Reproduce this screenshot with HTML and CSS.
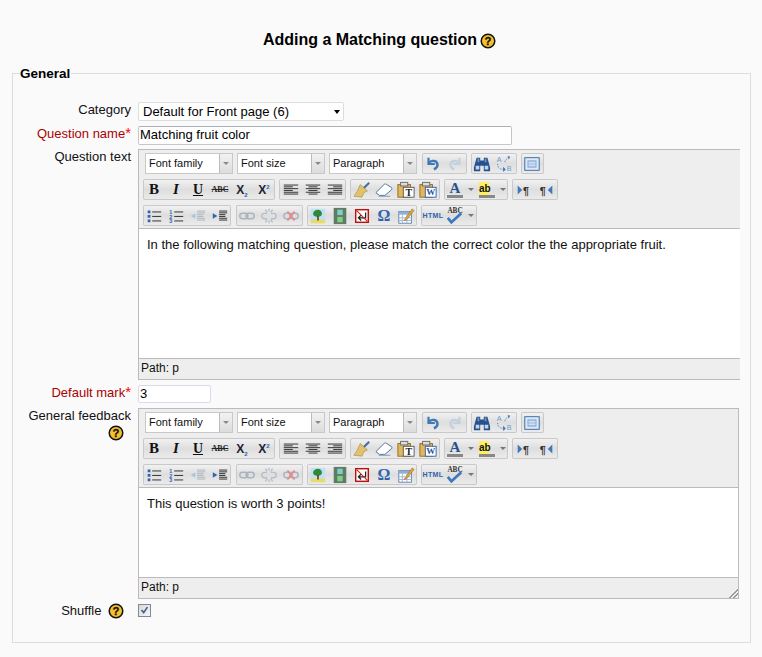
FILE: index.html
```html
<!DOCTYPE html>
<html lang="en">
<head>
<meta charset="utf-8">
<title>Adding a Matching question</title>
<link rel="stylesheet" href="styles.css">
</head>
<body>
<svg class="defs" width="0" height="0" aria-hidden="true">
  <symbol id="help" viewBox="0 0 17 17">
    <circle cx="8.5" cy="8.5" r="7.2" fill="#f5c02c" stroke="#111" stroke-width="1.6"/>
    <text x="8.5" y="13" text-anchor="middle" font-family="Liberation Sans" font-weight="700" font-size="12" fill="#111" stroke="#111" stroke-width=".3">?</text>
  </symbol>
  <symbol id="undo" viewBox="0 0 20 20"><path d="M5 3v7h7" fill="none" stroke="#3f78b8" stroke-width="2.400"/><path d="M5 9c3-4 10-3 10 2 0 3-2 4-4 5" fill="none" stroke="#3f78b8" stroke-width="2.600"/></symbol>
  <symbol id="redo" viewBox="0 0 20 20"><path d="M15 3v7H8" fill="none" stroke="#c3d0de" stroke-width="2.400"/><path d="M15 9c-3-4-10-3-10 2 0 3 2 4 4 5" fill="none" stroke="#c3d0de" stroke-width="2.600"/></symbol>
  <symbol id="find" viewBox="0 0 20 20"><path d="M4 3h4v3h4V3h4l3 11v4h-7v-6H8v6H1v-4z" fill="#27508c"/><path d="M3 12h4v4H3zM13 12h4v4h-4z" fill="#bcd6ef"/><path d="M5 4h2v4H5zM13 4h2v4h-2z" fill="#6f94c4"/></symbol>
  <symbol id="replace" viewBox="0 0 20 20"><text x="2" y="8" font-family="Liberation Sans" font-size="8" fill="#6a9ad0">A</text><text x="13" y="18" font-family="Liberation Sans" font-size="8" fill="#6a9ad0">B</text><path d="M3 10c0 5 3 6 7 6M11 8c0-2 1-3 4-5" fill="none" stroke="#3f78b8" stroke-dasharray="1 1"/><path d="M9 13l3 3-3 3zM14 1l3 1-2 3z" fill="#3f78b8"/></symbol>
  <symbol id="full" viewBox="0 0 20 20"><rect x="2" y="3" width="16" height="14" fill="#dce8f6" stroke="#31639f"/><path d="M5 6h10v8H5z" fill="#7fa6d6"/><path d="M6 8h8M6 10h8M6 12h8" stroke="#fff"/></symbol>
  <symbol id="al" viewBox="0 0 20 20"><path d="M2 4.500h16M2 6.500h10M2 8.500h16M2 10.500h10M2 12.500h16M2 14.500h16" stroke="#222"/></symbol>
  <symbol id="ac" viewBox="0 0 20 20"><path d="M2 4.500h16M5 6.500h10M2 8.500h16M5 10.500h10M2 12.500h16M5 14.500h10" stroke="#222"/></symbol>
  <symbol id="ar" viewBox="0 0 20 20"><path d="M2 4.500h16M8 6.500h10M2 8.500h16M8 10.500h10M2 12.500h16M2 14.500h16" stroke="#222"/></symbol>
  <symbol id="brush" viewBox="0 0 20 20"><path d="M11 9L18 2" stroke="#4b6fa0" stroke-width="2.400"/><path d="M8 4l8 7-4 2-2 5-9-1 4-6z" fill="#e2c36c" stroke="#9a7f30" stroke-width=".6"/></symbol>
  <symbol id="eraser" viewBox="0 0 20 20"><path d="M1 13L10 4c1-1 2-1 3 0l5 3c1 1 1 2 0 3l-7 6H5z" fill="#fff" stroke="#3f6a9c"/><path d="M4 17h13" stroke="#7d99bb"/></symbol>
  <symbol id="pastet" viewBox="0 0 20 20"><rect x="1" y="4" width="14" height="14" fill="#e3b65a" stroke="#8a6a20"/><rect x="4" y="1.500" width="8" height="4" fill="#ddd" stroke="#666"/><rect x="7" y="7" width="12" height="11" fill="#fff" stroke="#555"/><text x="13" y="16.500" text-anchor="middle" font-family="Liberation Serif" font-weight="700" font-size="11" fill="#222">T</text></symbol>
  <symbol id="pastew" viewBox="0 0 20 20"><rect x="1" y="4" width="14" height="14" fill="#e3b65a" stroke="#8a6a20"/><rect x="4" y="1.500" width="8" height="4" fill="#ddd" stroke="#666"/><rect x="7" y="7" width="12" height="11" fill="#fff" stroke="#2f5da0"/><text x="13" y="16" text-anchor="middle" font-family="Liberation Serif" font-weight="700" font-size="10" fill="#2456a6">W</text></symbol>
  <symbol id="ltr" viewBox="0 0 20 20"><path d="M3 5l5 5-5 5z" fill="#3f78b8"/><text x="9" y="15" font-family="Liberation Sans" font-weight="700" font-size="12" fill="#333">¶</text></symbol>
  <symbol id="rtl" viewBox="0 0 20 20"><path d="M17 5l-5 5 5 5z" fill="#3f78b8"/><text x="3" y="15" font-family="Liberation Sans" font-weight="700" font-size="12" fill="#333">¶</text></symbol>
  <symbol id="ul" viewBox="0 0 20 20"><path d="M8 5.500h10M8 10.500h10M8 15.500h10" stroke="#222"/><path d="M3 4h3v3H3zM3 9h3v3H3zM3 14h3v3H3z" fill="#2f63ad"/></symbol>
  <symbol id="ol" viewBox="0 0 20 20"><path d="M8 5.500h10M8 10.500h10M8 15.500h10" stroke="#222"/><text x="2.500" y="8" font-family="Liberation Sans" font-weight="700" font-size="6" fill="#2f63ad">1</text><text x="2.500" y="13" font-family="Liberation Sans" font-weight="700" font-size="6" fill="#2f63ad">2</text><text x="2.500" y="18" font-family="Liberation Sans" font-weight="700" font-size="6" fill="#2f63ad">3</text></symbol>
  <symbol id="outd" viewBox="0 0 20 20"><path d="M9 4.500h9M9 6.500h9M9 8.500h7M9 10.500h7M9 12.500h9M9 14.500h9" stroke="#aab2bb"/><path d="M7 7v6L2 10z" fill="#aac3de"/></symbol>
  <symbol id="ind" viewBox="0 0 20 20"><path d="M9 4.500h9M9 6.500h9M9 8.500h7M9 10.500h7M9 12.500h9M9 14.500h9" stroke="#222"/><path d="M2 7v6l5-3z" fill="#2f63ad"/></symbol>
  <symbol id="link" viewBox="0 0 20 20"><g fill="none" stroke="#aab4c0" stroke-width="1.600"><rect x="2" y="7" width="9" height="6" rx="3"/><rect x="9" y="7" width="9" height="6" rx="3"/></g></symbol>
  <symbol id="unlink" viewBox="0 0 20 20"><g fill="none" stroke="#b6bec8" stroke-width="1.500"><path d="M8 7H5a3 3 0 0 0 0 6h3M12 7h3a3 3 0 0 1 0 6h-3M6 3l2 3M14 3l-2 3M6 17l2-3M14 17l-2-3M10 2v3M10 15v3"/></g></symbol>
  <symbol id="anchor" viewBox="0 0 20 20"><g fill="none" stroke="#aab4c0" stroke-width="1.600"><rect x="2" y="7" width="9" height="6" rx="3"/><rect x="9" y="7" width="9" height="6" rx="3"/></g><path d="M6 5l8 10M14 5l-8 10" stroke="#e28b8b" stroke-width="2"/></symbol>
  <symbol id="image" viewBox="0 0 20 20"><rect x="2" y="2" width="16" height="16" fill="#bfe0f6"/><path d="M2 14h16v4H2z" fill="#e9dc66"/><path d="M10 3c4 0 6 5 3 7-1 1-6 1-7 0-3-2-1-7 4-7z" fill="#2f8a36"/><path d="M9 10h2v5H9z" fill="#7a4a1e"/></symbol>
  <symbol id="media" viewBox="0 0 20 20"><rect x="3" y="1" width="14" height="18" fill="#5f7a66"/><rect x="7" y="3" width="6" height="6" fill="#7fd0c4"/><rect x="7" y="11" width="6" height="6" fill="#7fd07f"/></symbol>
  <symbol id="nbr" viewBox="0 0 20 20"><rect x="3" y="3" width="14" height="14" fill="#fff" stroke="#b11" stroke-width="1.600"/><path d="M14 6v6H7M9 9l-3 3 3 3" fill="none" stroke="#222" stroke-width="1.400"/><path d="M4 4l12 12" stroke="#c22" stroke-width="1.200"/></symbol>
  <symbol id="table" viewBox="0 0 20 20"><rect x="2" y="5" width="14" height="13" fill="#fff" stroke="#5a7fae"/><path d="M2 8h14M2 12h14M2 15h14M6 8v10M11 8v10" stroke="#9db5d0"/><path d="M2 5h14v3H2z" fill="#8fb0d6"/><path d="M9 13l8-11 2 2-8 10-3 1z" fill="#e3a53c" stroke="#8a5a10" stroke-width=".5"/></symbol>
  <symbol id="spell" viewBox="0 0 24 20"><text x="12" y="7" text-anchor="middle" font-family="Liberation Serif" font-weight="700" font-size="8" fill="#333">ABC</text><path d="M4 12l4 5L19 7" fill="none" stroke="#3f78c0" stroke-width="3"/></symbol>
</svg>

<main class="page">
  <h2 class="title">Adding a Matching question<svg class="help help-title"><use href="#help"/></svg></h2>
  <form>
    <fieldset class="box">
      <legend class="box-legend">General</legend>

      <div class="row row-category">
        <div class="lab">Category</div>
        <div class="sel-wrap"><select class="sel"><option>Default for Front page (6)</option></select></div>
      </div>

      <div class="row row-name">
        <div class="lab req">Question name<span class="star">*</span></div>
        <input class="inp inp-name" value="Matching fruit color">
      </div>

      <div class="row row-text">
        <div class="lab">Question text</div>
        <div class="editor editor-wide">
          <div class="tools">
            <div class="tool-row tool-row-sel">
              <div class="drop">Font family<span class="drop-arrow"></span></div>
              <div class="drop">Font size<span class="drop-arrow"></span></div>
              <div class="drop">Paragraph<span class="drop-arrow"></span></div>
              <div class="grp grp-undo"><span class="b"><svg><use href="#undo"/></svg></span><span class="b"><svg><use href="#redo"/></svg></span></div>
              <div class="grp grp-find"><span class="b"><svg><use href="#find"/></svg></span><span class="b"><svg><use href="#replace"/></svg></span></div>
              <div class="grp"><span class="b"><svg><use href="#full"/></svg></span></div>
            </div>
            <div class="tool-row">
              <div class="grp grp-flush"><span class="b t-b">B</span><span class="b t-i">I</span><span class="b t-u">U</span><span class="b t-s">ABC</span><span class="b t-x"><span>X<sub>2</sub></span></span><span class="b t-x"><span>X<sup>2</sup></span></span></div>
              <div class="grp grp-left"><span class="b"><svg><use href="#al"/></svg></span><span class="b"><svg><use href="#ac"/></svg></span><span class="b"><svg><use href="#ar"/></svg></span></div>
              <div class="grp grp-both"><span class="b"><svg><use href="#brush"/></svg></span><span class="b"><svg><use href="#eraser"/></svg></span><span class="b"><svg><use href="#pastet"/></svg></span><span class="b"><svg><use href="#pastew"/></svg></span></div>
              <div class="grp grp-flush"><span class="b t-a"><span class="a-letter">A</span></span><span class="mini"></span><span class="b t-h"><span class="h-letter">ab</span></span><span class="mini"></span></div>
              <div class="grp grp-both"><span class="b"><svg><use href="#ltr"/></svg></span><span class="b"><svg><use href="#rtl"/></svg></span></div>
            </div>
            <div class="tool-row">
              <div class="grp grp-flush"><span class="b"><svg><use href="#ul"/></svg></span><span class="b"><svg><use href="#ol"/></svg></span><span class="b"><svg><use href="#outd"/></svg></span><span class="b"><svg><use href="#ind"/></svg></span></div>
              <div class="grp grp-link"><span class="b"><svg><use href="#link"/></svg></span><span class="b"><svg><use href="#unlink"/></svg></span><span class="b"><svg><use href="#anchor"/></svg></span></div>
              <div class="grp grp-flush"><span class="b"><svg><use href="#image"/></svg></span><span class="b"><svg><use href="#media"/></svg></span><span class="b"><svg><use href="#nbr"/></svg></span><span class="b t-o">Ω</span><span class="b"><svg><use href="#table"/></svg></span></div>
              <div class="grp grp-both"><span class="b t-html">HTML</span><span class="b"><svg class="wide"><use href="#spell"/></svg></span><span class="mini"></span></div>
            </div>
          </div>
          <div class="area area-1">In the following matching question, please match the correct color the the appropriate fruit.</div>
          <div class="path">Path: p</div>
        </div>
      </div>

      <div class="row row-mark">
        <div class="lab req">Default mark<span class="star">*</span></div>
        <input class="inp inp-mark" value="3">
      </div>

      <div class="row row-feedback">
        <div class="lab">General feedback<br><svg class="help help-lab"><use href="#help"/></svg></div>
        <div class="editor">
          <div class="tools">
            <div class="tool-row tool-row-sel">
              <div class="drop">Font family<span class="drop-arrow"></span></div>
              <div class="drop">Font size<span class="drop-arrow"></span></div>
              <div class="drop">Paragraph<span class="drop-arrow"></span></div>
              <div class="grp grp-undo"><span class="b"><svg><use href="#undo"/></svg></span><span class="b"><svg><use href="#redo"/></svg></span></div>
              <div class="grp grp-find"><span class="b"><svg><use href="#find"/></svg></span><span class="b"><svg><use href="#replace"/></svg></span></div>
              <div class="grp"><span class="b"><svg><use href="#full"/></svg></span></div>
            </div>
            <div class="tool-row">
              <div class="grp grp-flush"><span class="b t-b">B</span><span class="b t-i">I</span><span class="b t-u">U</span><span class="b t-s">ABC</span><span class="b t-x"><span>X<sub>2</sub></span></span><span class="b t-x"><span>X<sup>2</sup></span></span></div>
              <div class="grp grp-left"><span class="b"><svg><use href="#al"/></svg></span><span class="b"><svg><use href="#ac"/></svg></span><span class="b"><svg><use href="#ar"/></svg></span></div>
              <div class="grp grp-both"><span class="b"><svg><use href="#brush"/></svg></span><span class="b"><svg><use href="#eraser"/></svg></span><span class="b"><svg><use href="#pastet"/></svg></span><span class="b"><svg><use href="#pastew"/></svg></span></div>
              <div class="grp grp-flush"><span class="b t-a"><span class="a-letter">A</span></span><span class="mini"></span><span class="b t-h"><span class="h-letter">ab</span></span><span class="mini"></span></div>
              <div class="grp grp-both"><span class="b"><svg><use href="#ltr"/></svg></span><span class="b"><svg><use href="#rtl"/></svg></span></div>
            </div>
            <div class="tool-row">
              <div class="grp grp-flush"><span class="b"><svg><use href="#ul"/></svg></span><span class="b"><svg><use href="#ol"/></svg></span><span class="b"><svg><use href="#outd"/></svg></span><span class="b"><svg><use href="#ind"/></svg></span></div>
              <div class="grp grp-link"><span class="b"><svg><use href="#link"/></svg></span><span class="b"><svg><use href="#unlink"/></svg></span><span class="b"><svg><use href="#anchor"/></svg></span></div>
              <div class="grp grp-flush"><span class="b"><svg><use href="#image"/></svg></span><span class="b"><svg><use href="#media"/></svg></span><span class="b"><svg><use href="#nbr"/></svg></span><span class="b t-o">Ω</span><span class="b"><svg><use href="#table"/></svg></span></div>
              <div class="grp grp-both"><span class="b t-html">HTML</span><span class="b"><svg class="wide"><use href="#spell"/></svg></span><span class="mini"></span></div>
            </div>
          </div>
          <div class="area area-2">This question is worth 3 points!</div>
          <div class="path">Path: p<span class="grip"></span></div>
        </div>
      </div>

      <div class="row row-shuffle">
        <div class="lab">Shuffle <svg class="help help-inline"><use href="#help"/></svg></div>
        <span class="check"><svg viewBox="0 0 13 13"><path d="M3 6l2.500 3L10 2.500" fill="none" stroke="#4a5f8f" stroke-width="2"/></svg></span>
      </div>
    </fieldset>
  </form>
</main>
</body>
</html>
```

FILE: styles.css
```css
* { box-sizing: border-box; }
html, body { margin: 0; padding: 0; }
body {
  background: #fafafa;
  color: #111;
  font-family: "Liberation Sans", Arial, sans-serif;
  font-size: 13px;
  overflow: hidden;
  height: 657px;
}
.defs { position: absolute; }
.page { padding: 31px 12px 0; }
.title {
  margin: 0 0 17px;
  height: 18px;
  font-size: 16px;
  line-height: 18px;
  font-weight: 700;
  text-align: center;
  color: #000;
  padding-right: 3px;
  white-space: nowrap;
}
.help { width: 16px; height: 16px; vertical-align: -4px; }
.help-title { margin-left: 3px; }
.box {
  margin: 0;
  width: 739px;
  height: 577px;
  padding: 21px 0 0;
  border: 1px solid #ddd;
  min-width: 0;
}
.box-legend {
  margin-left: 7px;
  padding: 0 1px 0 0;
  font-size: 13.5px;
  line-height: 15px;
  font-weight: 700;
  color: #000;
}
.row { display: flex; gap: 7px; align-items: flex-start; }
.lab {
  width: 118px;
  flex: none;
  padding-top: 1px;
  text-align: right;
  line-height: 14px;
}
.req { color: #a00; }
.star { color: #f00; font-size: 15px; line-height: 10px; }
.row-category { height: 24px; }
.row-name { height: 23px; }
.row-text { height: 236px; }
.row-mark { height: 23px; }
.row-feedback { height: 196px; }
.sel-wrap { position: relative; width: 206px; height: 19px; }
.sel-wrap::after {
  content: "";
  position: absolute;
  right: 4px;
  top: 8px;
  border: 3px solid transparent;
  border-top: 4px solid #000;
  border-bottom: 0;
}
.sel {
  display: block;
  appearance: none;
  width: 206px;
  height: 19px;
  padding: 0 0 0 4px;
  border: 1px solid #ddd;
  border-radius: 2px;
  background: #fff;
  font: 13px "Liberation Sans", Arial, sans-serif;
  color: #000;
}
.inp {
  display: block;
  height: 19px;
  padding: 0 1px 2px;
  border: 1px solid #c3c7cc;
  border-top-color: #aab0b6;
  border-radius: 2px;
  background: #fff;
  font: 13px "Liberation Sans", Arial, sans-serif;
  color: #000;
}
.inp-name { width: 374px; }
.inp-mark { width: 73px; height: 18px; border-color: #d5dde8; }
.help-lab { display: inline-block; margin: 2px 7px 0 0; vertical-align: top; }
.help-inline { margin: 0 7px 0 3px; }
.row-shuffle .lab { margin-top: -2px; }

.editor {
  width: 601px;
  border: 1px solid #bbb;
  background: #eee;
  height: 191px;
  display: flex;
  flex-direction: column;
}
.editor-wide { width: 602px; height: 231px; border-right: 0; }
.tools {
  height: 78px;
  padding: 3px 0 0 4px;
  display: flex;
  flex-direction: column;
  gap: 5px;
  flex: none;
}
.tool-row { display: flex; gap: 4px; height: 21px; }
.tool-row-sel { padding-left: 2px; }
.drop {
  width: 88px;
  height: 21px;
  background: #fff;
  border: 1px solid #c8c8c8;
  line-height: 18px;
  padding-left: 3px;
  color: #111;
  position: relative;
  font-size: 11px;
}
.drop-arrow {
  position: absolute;
  top: 0;
  right: 0;
  width: 13px;
  height: 19px;
  background: linear-gradient(#f2f2f2, #dcdcdc);
  border-left: 1px solid #bbb;
}
.drop-arrow::after {
  content: "";
  position: absolute;
  left: 3px;
  top: 8px;
  border: 3px solid transparent;
  border-top: 3px solid #888;
  border-bottom: 0;
}
.grp {
  display: flex;
  height: 21px;
  padding-right: 1px;
  box-shadow: inset 0 0 0 1px #c9c9c9;
  border-radius: 2px;
  background: linear-gradient(#f3f3f3, #dedede 50%, #ececec);
}
.grp-flush { padding-right: 0; }
.grp-find { padding-right: 2px; }
.grp-both { padding: 0 1px; }
.grp-left { padding: 0 0 0 1px; }
.grp-undo { margin-left: 1px; }
.grp-link { margin-left: 1px; }
.b {
  width: 22px;
  height: 21px;
  display: flex;
  align-items: center;
  justify-content: center;
  flex: none;
  color: #222;
}
.b svg { width: 18px; height: 18px; display: block; overflow: visible; }
.b svg.wide { width: 22px; }
.mini { width: 10px; height: 21px; position: relative; flex: none; }
.mini::after {
  content: "";
  position: absolute;
  left: 2px;
  top: 9px;
  border: 3px solid transparent;
  border-top: 3px solid #777;
  border-bottom: 0;
}
.t-b { font: 700 15px "Liberation Serif", serif; color: #111; }
.t-i { font: italic 700 15px "Liberation Serif", serif; color: #111; }
.t-u { font: 700 14px "Liberation Serif", serif; text-decoration: underline; color: #111; }
.t-s { font: 700 8px "Liberation Serif", serif; text-decoration: line-through; color: #222; }
.t-x { font: 700 12px "Liberation Sans", sans-serif; color: #223; }
.t-x sub, .t-x sup { font-size: 6px; color: #2f63ad; line-height: 0; }
.a-letter {
  display: block;
  width: 16px;
  text-align: center;
  font: 700 15px/14px "Liberation Serif", serif;
  color: #27508c;
  border-bottom: 3px solid #888;
}
.h-letter {
  display: block;
  width: 16px;
  font: 700 10px/13px "Liberation Sans", sans-serif;
  color: #111;
  background: linear-gradient(90deg, #ffef5e 60%, transparent 60%);
  border-bottom: 3px solid #888;
}
.t-o { font: 700 16px "Liberation Serif", serif; color: #2f63ad; }
.t-html { font: 700 7px "Liberation Sans", sans-serif; color: #2f63ad; letter-spacing: .4px; }

.area {
  flex: 1;
  background: #fff;
  border-top: 1px solid #bbb;
  border-bottom: 1px solid #bbb;
  padding: 8px 0 0 8px;
  line-height: 15px;
  color: #111;
}
.path {
  height: 20px;
  line-height: 19px;
  padding-left: 2px;
  position: relative;
  flex: none;
  font-size: 12px;
}
.grip {
  position: absolute;
  right: 0;
  bottom: 0;
  width: 11px;
  height: 11px;
  background: repeating-linear-gradient(135deg, #999 0 1px, #eee 1px 3px);
  clip-path: polygon(100% 0, 100% 100%, 0 100%);
}
.check {
  display: block;
  width: 13px;
  height: 13px;
  border: 1px solid #7d8a99;
  background: linear-gradient(135deg, #d8d8d8, #f6f6f6);
}
.check svg { display: block; width: 11px; height: 11px; }
```
